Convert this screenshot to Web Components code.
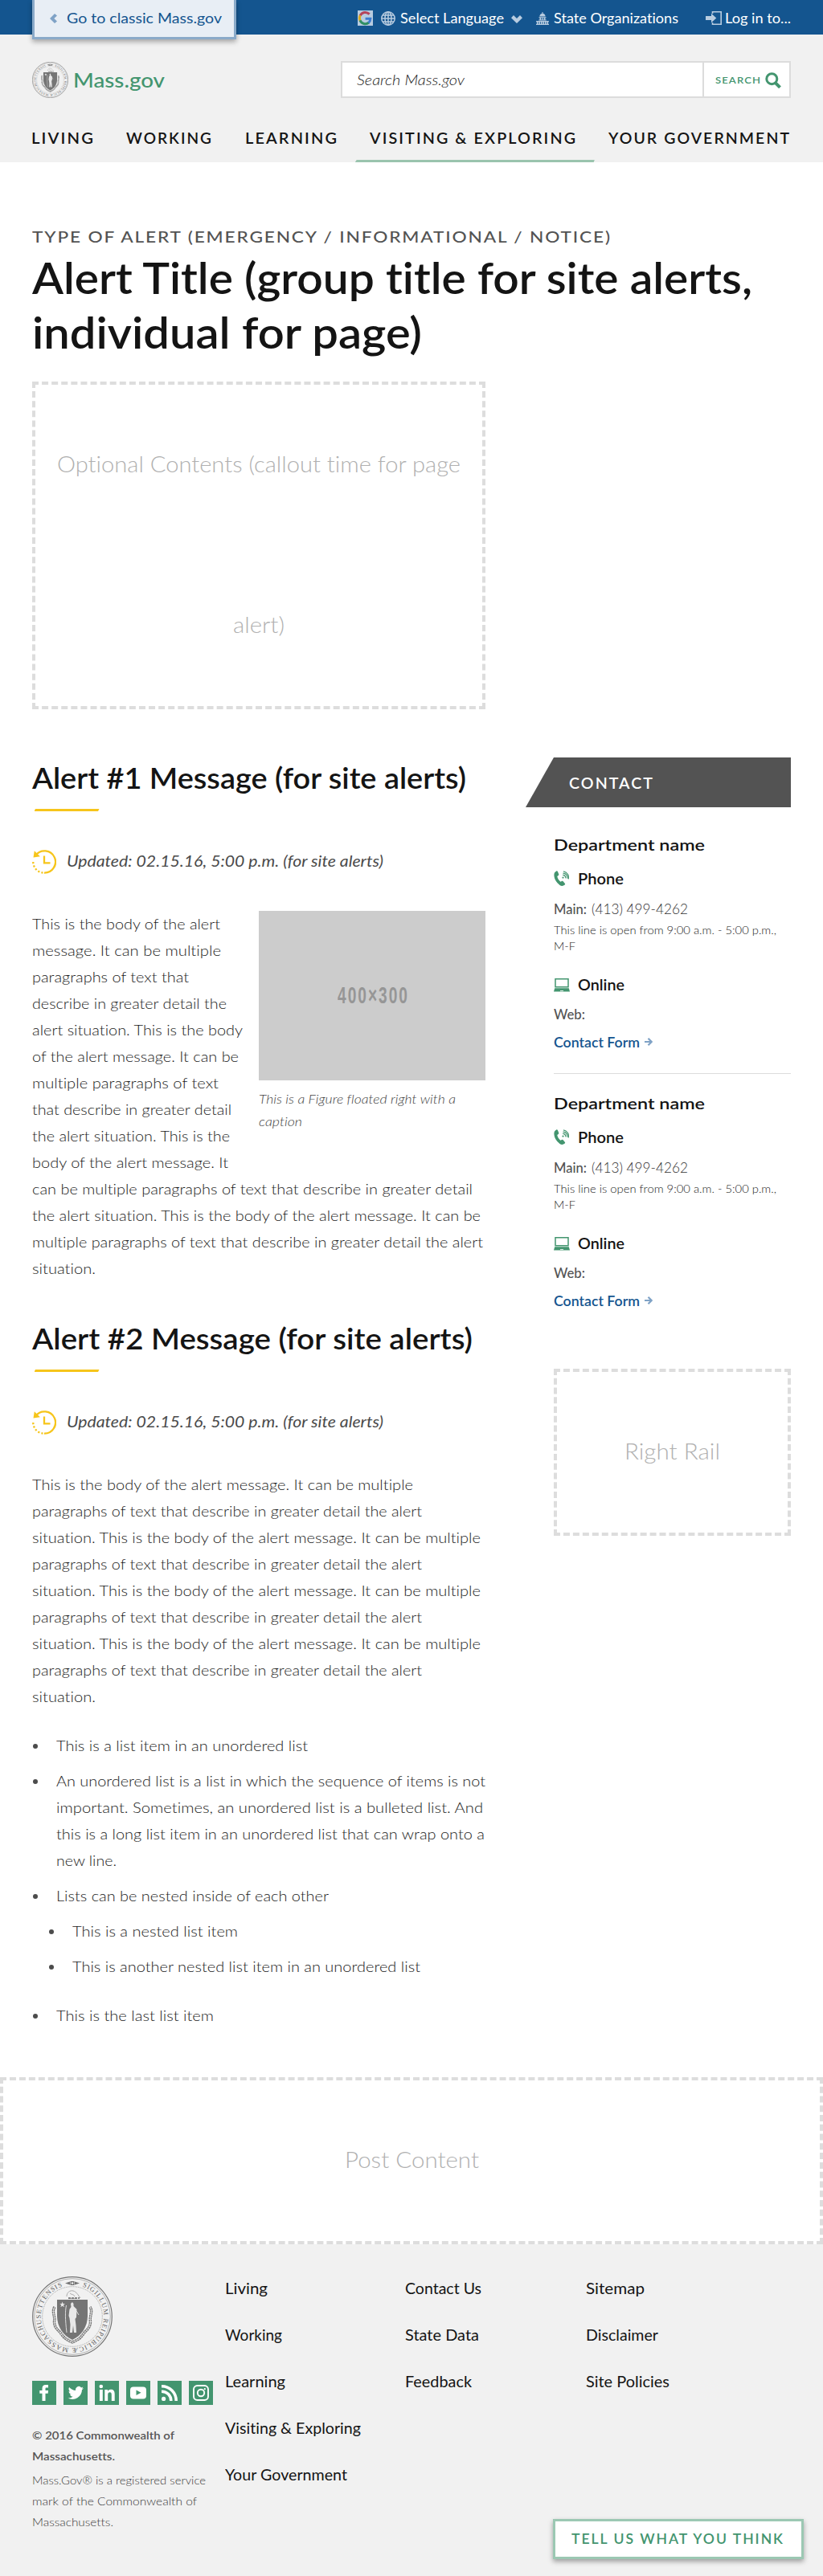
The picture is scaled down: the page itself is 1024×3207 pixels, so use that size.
<!DOCTYPE html>
<html lang="en">
<head>
<meta charset="utf-8">
<title>Mass.gov alerts</title>
<style>
body{margin:0;background:#fff;font-family:Lato,"Open Sans",sans-serif;font-variant-ligatures:none;color:#141414;--green:#43956f;--blue:#14558f;--gray:#1c1c1c;--line:#dcdcdc}
</style>
</head>
<body>
<alert-page></alert-page>
<script>
const define = (name, html, after) => customElements.define(name, class extends HTMLElement {
  connectedCallback() {
    if (this.shadowRoot) return;
    const t = document.createElement('template');
    t.innerHTML = typeof html === 'function' ? html(this) : html;
    this.attachShadow({mode: 'open'}).append(t.content.cloneNode(true));
    if (after) after(this);
  }
});
const line = (w, text) => `<fit-text w="${w}">${text}</fit-text>`;

const GLYPHS = {
  left: ['0 0 9 12', '<path fill="#7fa2c6" d="M6 0l3 2.600L5.300 6 9 9.400 6 12 0 6z"/>'],
  google: ['0 0 19 19', '<path fill="#b8cce0" d="M0 0h19v19H0z"/><g fill="none" stroke-width="3"><path stroke="#b5435a" d="M3.200 6.400A7 7 0 0 1 14.600 4.600"/><path stroke="#dba91c" d="M3.200 12.600a7 7 0 0 1 0-6.400"/><path stroke="#2f8f63" d="M3 12.400a7 7 0 0 0 11 2.600"/><path stroke="#3c7bd0" d="M13.400 15.400a7 7 0 0 0 2.500-5.200H9.600"/></g>'],
  globe: ['0 0 18 18', '<g fill="none" stroke="#b8cce0" stroke-width="1.500"><circle cx="9" cy="9" r="8.200"/><ellipse cx="9" cy="9" rx="4" ry="8.200"/><path d="M9 .8v16.400M.8 9h16.400M2 4.900h14M2 13.100h14"/></g>'],
  down: ['0 0 14 10', '<path fill="#b8cce0" d="M0 3.200L3 0l4 4 4-4 3 3.200L7 10z"/>'],
  capitol: ['0 0 16 16', '<path fill="#b8cce0" d="M7.500 0h1v1.800c2 .5 3 1.800 3.200 3.700H4.300C4.500 3.600 5.500 2.300 7.500 1.800zM3.500 6.200h9v1h-1v2.300h1.200v1H3.300v-1h1.200V7.200h-1zM0 11h16v1h-.8v3h.8v1H0v-1h.8v-3H0z"/><path stroke="#14558f" stroke-width=".8" d="M6.500 7.200v2.300M8 7.200v2.300M9.500 7.200v2.300M3 12v3M5.500 12v3M8 12v3M10.500 12v3M13 12v3"/>'],
  login: ['0 0 20 17', '<path fill="none" stroke="#b8cce0" stroke-width="1.600" d="M8.500 3V.8h10.700v15.400H8.500V14"/><path fill="#b8cce0" d="M0 6h7V2.700l6.300 5.800L7 14.300V11H0z"/>'],
  search: ['0 0 20 20', '<circle cx="8.300" cy="8.200" r="6.500" fill="none" stroke="#43956f" stroke-width="3"/><path stroke="#43956f" stroke-width="4" d="M12.500 12.800l6 6"/>'],
  clock: ['0 0 30 30', '<g fill="none" stroke="#f6c51b" stroke-width="2.300"><path d="M4.500 6.600A13.700 13.700 0 1 1 15 28.700"/><path stroke-dasharray="2.200 2.200" d="M13.500 28.600A13.700 13.700 0 0 1 1.400 13"/><path d="M15 7.500v8.900h7.500"/></g><path fill="#f6c51b" d="M2.800 1.200L1.500 9.600l8.400-1.300z"/>'],
  phone: ['0 0 19 20', '<path fill="#43956f" d="M3.200.4c.7-.4 1.400-.1 1.700.5l1.300 3.400c.3.800 0 1.300-.6 1.700l-1.300.9c.5 2.600 2 5 4.100 6.800l1.500-.8c.6-.4 1.300-.3 1.800.3l2.200 2.700c.4.600.3 1.200-.2 1.600-1.900 1.600-4 2-6.200.4C3.200 14.700.6 10.700.4 5.600.3 3.200 1.200 1.400 3.200.4z"/><circle cx="11.500" cy="8.600" r="1.100" fill="#43956f"/><g fill="none" stroke="#43956f" stroke-width="1.300"><path d="M11.200 5.400a3.300 3.300 0 0 1 3.600 3.900M11.500 3.100a5.700 5.700 0 0 1 5.600 6.600"/><path d="M12 .9a7.500 7.500 0 0 1 6.200 9.500"/></g>'],
  laptop: ['0 0 20 17', '<path fill="none" stroke="#43956f" stroke-width="1.500" d="M2 .8h16v9.900H2z"/><path fill="#43956f" d="M1.200 12.300h17.600L20 16.600H0z"/><path fill="#d9ebe2" d="M8 15h4v1H8z"/>'],
  arrow: ['0 0 10 10', '<path fill="none" stroke="#7fa2c6" stroke-width="2.200" d="M0 5h8M4.500.8L8.700 5l-4.200 4.200"/>'],
  facebook: ['0 0 30 30', '<path fill="#fff" d="M20 5h-3.200C13.800 5 12.500 6.800 12.500 9.500V12H9.300v3.700h3.200V25h4v-9.300h3.200l.3-3.700h-3.500V9.900c0-.9.400-1.300 1.300-1.300H20z"/>'],
  twitter: ['0 0 30 30', '<path fill="#fff" d="M25 8.900c-.7.300-1.300.5-2.100.6.700-.5 1.300-1.200 1.600-2-.7.400-1.500.7-2.400.9a4 4 0 0 0-6.900 3.700c-3.200-.2-6-1.700-8.100-4.100-1.100 1.900-.5 4.200 1.300 5.400-.6 0-1.200-.2-1.800-.5 0 2 1.400 3.600 3.200 4-.6.200-1.200.2-1.800.1.500 1.600 2 2.700 3.700 2.800A8.500 8.500 0 0 1 5.500 21.500 11.800 11.800 0 0 0 23 11.200c.8-.6 1.500-1.400 2-2.300z"/>'],
  linkedin: ['0 0 30 30', '<circle cx="7.800" cy="7" r="2.300" fill="#fff"/><path fill="#fff" d="M5.900 11h3.900v14H5.900zM12.300 11H16v1.900c.8-1.400 2.100-2.200 3.800-2.200 3.400 0 4.900 2 4.900 5.900V25h-3.900v-7.800c0-1.900-.6-3-2-3-1.700 0-2.600 1.100-2.600 3.100V25h-3.900z"/>'],
  youtube: ['0 0 30 30', '<rect x="5" y="7.500" width="20" height="15" rx="4" fill="#fff"/><path fill="#43956f" d="M12.500 11.500v6.500l6-3.200z"/>'],
  rss: ['0 0 30 30', '<circle cx="7.600" cy="22.400" r="2.600" fill="#fff"/><path fill="none" stroke="#fff" stroke-width="3.600" d="M5 13.200c6.800 0 11.800 5 11.800 11.800M5 6.800c10.300 0 18.200 7.900 18.200 18.200"/>'],
  instagram: ['0 0 30 30', '<g fill="none" stroke="#fff" stroke-width="1.900"><rect x="6" y="6" width="18" height="18" rx="4.500"/><circle cx="15" cy="15" r="4.200"/></g><circle cx="19.800" cy="10.200" r="1.100" fill="#fff"/>'],
};
define('glyph-icon', el => {
  const [box, art] = GLYPHS[el.getAttribute('name')];
  const [, , w, h] = box.split(' ');
  return `<style>:host{display:block;flex:none;width:${w}px;height:${h}px}svg{display:block}</style><svg width="${w}" height="${h}" viewBox="${box}">${art}</svg>`;
});

define('state-seal', el => `
<style>:host{display:block;flex:none;line-height:0}text{font:8.500px "Liberation Serif",serif;fill:#606060}</style>
<svg width="${el.getAttribute('size')}" height="${el.getAttribute('size')}" viewBox="0 0 100 100">
<defs><path id="ring" d="M62.500 12.700A39.300 39.300 0 1 1 39 12.200"/></defs>
<g fill="none" stroke="#757575"><circle cx="50" cy="50" r="49.300" stroke-width="1.200"/><circle cx="50" cy="50" r="47.300" stroke-width=".5"/><circle cx="50" cy="50" r="37.300" stroke-width="1" stroke-dasharray="1 .9" opacity=".6"/></g>
<text textLength="221" lengthAdjust="spacing"><textPath href="#ring">SIGILLUM REIPUBLICÆ MASSACHUSETTENSIS</textPath></text>
<path fill="#757575" d="M41 8.500l6-2v4zM59 8.500l-6-2v4zM47.500 6h5v5h-5z"/><circle cx="50" cy="8.500" r="1.300" fill="#f1f1f1"/>
<path fill="none" stroke="#757575" stroke-width="3.400" stroke-dasharray="2.400 .5" d="M28 38c-4 6 1 12-.5 18 0 9 6 11 9 16 4 6 9 8 13.500 10 4.500-2 9.500-4 13.500-10 3-5 9-7 9-16-1.500-6 3.500-12-.5-18"/>
<path fill="none" stroke="#f1f1f1" stroke-width=".9" d="M28 38c-4 6 1 12-.5 18 0 9 6 11 9 16 4 6 9 8 13.500 10 4.500-2 9.500-4 13.500-10 3-5 9-7 9-16-1.500-6 3.500-12-.5-18"/>
<path fill="#757575" d="M31 29h38v20c0 14-8 25-19 30-11-5-19-16-19-30z"/>
<path fill="none" stroke="#aaa" stroke-width="1" d="M45 27.500h11M43 25c0-5 4-8 8-7s6 5 9 9M47 21c2 2 5 1 6 4"/><path stroke="#666" stroke-width="1.500" stroke-dasharray="3 1" d="M45 27h14"/>
<path fill="#e8e8e8" d="M37.600 31.500l.9 2.500h2.500l-2 1.600.8 2.600-2.200-1.500-2.200 1.500.8-2.600-2-1.600h2.500zM48 34l2-2 1.500 2v3l4 4-.5 10-1.500 2 1 8 .5 9h-3l-1-9-1 9h-3l.5-10-1-8-1-3 1-8 2-3z"/>
<path fill="none" stroke="#ddd" stroke-width="1" d="M42.500 36c-1.500 8-1.500 16 .5 34M55 43l3 5"/>
</svg>`);

define('site-header', `
<style>
:host{display:block;background:#f1f1f1;height:202px;overflow:visible}
.bar{height:43px;background:var(--blue);padding:0 40px;display:flex;justify-content:space-between;color:#fff;font-size:18px;line-height:44px}
.tab{box-sizing:border-box;width:254px;height:49px;border:3px solid #8aaac9;border-top:0;background:#e8eef5;color:var(--blue);display:flex;align-items:center;padding:0 0 1px 19px;gap:12px;box-shadow:0 3px 6px rgba(0,0,0,.32);line-height:45px}
.tools{display:flex;align-items:center}
.tools glyph-icon{margin-top:2px}
.row{display:flex;justify-content:space-between;padding:33px 40px 0;align-items:center;height:46px}
.brand{display:flex;gap:6px;color:var(--green);font-size:25.500px;font-weight:500;align-items:center}
.search{box-sizing:border-box;width:560px;height:46px;border:2px solid var(--line);background:#fff;display:flex}
.field{flex:1;padding-left:18px;font:italic 300 18px/42px Lato,sans-serif;color:#222}
.go{width:108px;box-sizing:border-box;border-left:2px solid var(--line);display:flex;align-items:center;gap:6px;padding-left:14px;font-size:12px;font-weight:600;color:var(--green);letter-spacing:1px}
.go glyph-icon{margin-top:2px}
nav{display:flex;justify-content:space-between;padding:35px 42px 0 39px;font-size:19px;font-weight:600;line-height:30px;height:45px;letter-spacing:2px}
nav div{position:relative}
.on::after{content:"";position:absolute;left:-18px;right:-24px;bottom:0;height:3px;background:#9ac4ae;clip-path:polygon(2px 0,100% 0,calc(100% - 1px) 100%,0 100%)}
</style>
<div class="bar"><div class="tab"><glyph-icon name="left"></glyph-icon>${line(193,'Go to classic Mass.gov')}</div>
<div class="tools"><glyph-icon name="google"></glyph-icon><glyph-icon name="globe" style="margin-left:10px"></glyph-icon><span style="margin-left:6px">${line(129,'Select Language')}</span><glyph-icon name="down" style="margin:4px 0 0 9px"></glyph-icon><glyph-icon name="capitol" style="margin-left:17px"></glyph-icon><span style="margin-left:6px">${line(155,'State Organizations')}</span><glyph-icon name="login" style="margin-left:34px"></glyph-icon><span style="margin-left:4px">${line(82,'Log in to...')}</span></div></div>
<div class="row"><div class="brand"><state-seal size="45"></state-seal>${line(114,'Mass.gov')}</div>
<div class="search"><div class="field">${line(134,'Search Mass.gov')}</div><div class="go">${line(56,'SEARCH')}<glyph-icon name="search"></glyph-icon></div></div></div>
<nav><div>${line(77,'LIVING')}</div><div>${line(106,'WORKING')}</div><div>${line(114,'LEARNING')}</div><div class="on">${line(256,'VISITING &amp; EXPLORING')}</div><div>${line(225,'YOUR GOVERNMENT')}</div></nav>`);

define('dashed-box', `
<style>:host{display:block;box-sizing:border-box;border:4px dashed #ddd;color:#b0b0b0;font-size:28px;font-weight:300;line-height:200px;text-align:center}
div{height:100%;margin-top:-2px;display:flex;flex-direction:column;align-items:center}</style><div><slot></slot></div>`);

define('alert-message', el => `
<style>
:host{display:block;color:var(--gray);font-size:18.500px;font-weight:300;line-height:33px}
h2{margin:0;font-size:35.500px;font-weight:600;line-height:46px;color:#141414}
.rule{width:81px;height:3px;margin:15px 0 48px 2.500px;background:#f6c51b;clip-path:polygon(1.500px 0,100% 0,calc(100% - 1.500px) 100%,0 100%)}
.when{display:flex;gap:13px;height:30px;font-size:19px;font-weight:400;font-style:italic;line-height:28px;margin-bottom:46px;color:#4a4a4a}
</style>
<h2>${line(el.getAttribute('w'), el.getAttribute('heading'))}</h2><div class="rule"></div>
<div class="when"><glyph-icon name="clock"></glyph-icon>${line(394,'Updated: 02.15.16, 5:00 p.m. (for site alerts)')}</div>
<slot></slot>`);

define('alert-figure', `
<style>:host{display:block;float:right;width:282px;font-size:16px;font-style:italic;line-height:28px;color:#444}
.pic{height:211px;background:#ccc;color:#969696;font:bold 29px/210px "Liberation Sans Narrow","Liberation Sans",sans-serif;letter-spacing:3px;display:flex;justify-content:center;margin-bottom:9px}</style>
<div class="pic">${line(87,'400×300')}</div>${line(245,'This is a Figure floated right with a')}${line(54,'caption')}`);

define('bullet-list', `
<style>:host{display:flex;flex-direction:column;gap:11px}</style><slot></slot>`);
define('bullet-item', `
<style>:host{display:flex}i{flex:none;width:6px;height:6px;border-radius:3px;background:#4c4c4c;margin:14px 22.500px 0 1px}</style><i></i><div><slot></slot></div>`);

define('contact-card', `
<style>
:host{display:block;margin-left:35px;color:#535353;font-size:18px;line-height:30px}
h3,h4{margin:0;color:#141414;font-weight:600}
h3{font-size:20px}h4{font-size:19px;display:flex;align-items:center;gap:11px}
.main{display:flex;gap:6px;margin:7px 0 2px}
b{font-weight:500}span{font-weight:300;color:#333}
.hours{font-size:14px;font-weight:300;line-height:20px;color:#222}
.form{display:flex;gap:6px;align-items:center;color:var(--blue);font-weight:600;margin-top:5px}
</style>
<h3>${line(188,'Department name')}</h3>
<h4 style="margin-top:13px"><glyph-icon name="phone"></glyph-icon>${line(57,'Phone')}</h4>
<div class="main"><b>${line(41,'Main:')}</b><span>${line(120,'(413) 499-4262')}</span></div>
<div class="hours">${line(277,'This line is open from 9:00 a.m. - 5:00 p.m.,')}${line(27,'M-F')}</div>
<h4 style="margin-top:23px;margin-bottom:6px;gap:10px"><glyph-icon name="laptop"></glyph-icon>${line(58,'Online')}</h4>
<b>${line(39,'Web:')}</b>
<div class="form">${line(107,'Contact Form')}<glyph-icon name="arrow"></glyph-icon></div>`);

define('contact-rail', `
<style>:host{display:block;width:330px}
.bar{height:62px;background:#535353;clip-path:polygon(35px 0,100% 0,100% 100%,0 100%);color:#fff;font-size:19px;font-weight:600;letter-spacing:2px;line-height:64px;padding-left:54px;box-sizing:border-box;margin-bottom:31px}
hr{border:0;height:1px;background:var(--line);margin:24px 0 21px 35px}
dashed-box{height:208px;margin:70px 0 0 35px}</style>
<div class="bar">${line(104,'CONTACT')}</div><contact-card></contact-card><hr><contact-card></contact-card>
<dashed-box>${line(119,'Right Rail')}</dashed-box>`);

define('site-footer', () => {
  const col = links => `<div class="col">${links.map(([w, t]) => line(w, t)).join('')}</div>`;
  return `
<style>
:host{display:flex;position:relative;box-sizing:border-box;height:413px;background:#f1f1f1;padding:40px 0 0 40px}
.about{width:239.500px;font-size:14px;line-height:26px}
.social{display:flex;gap:9px;margin:30px 0 24.500px}
.social glyph-icon{background:var(--green)}
.own{font-weight:600;color:#555}.mark{margin-top:4px;font-weight:300;color:#3c3c3c}
.col{width:224.500px;display:flex;flex-direction:column;gap:28px;font-size:19px;line-height:30px}
.cta{position:absolute;right:24px;bottom:21px;box-sizing:border-box;width:312px;height:50px;border:3px solid #9cc8b3;background:#fff;box-shadow:0 3px 6px rgba(0,0,0,.35);color:var(--green);font-size:18px;font-weight:600;letter-spacing:2px;line-height:43px;padding-left:20px}
</style>
<div class="about"><state-seal size="100"></state-seal>
<div class="social">${['facebook','twitter','linkedin','youtube','rss','instagram'].map(n => `<glyph-icon name="${n}"></glyph-icon>`).join('')}</div>
<div class="own">${line(177,'© 2016 Commonwealth of')}${line(103,'Massachusetts.')}</div>
<div class="mark">${line(216,'Mass.Gov® is a registered service')}${line(205,'mark of the Commonwealth of')}${line(101,'Massachusetts.')}</div></div>
${col([[53,'Living'],[71,'Working'],[75,'Learning'],[169,'Visiting &amp; Exploring'],[152,'Your Government']])}
${col([[95,'Contact Us'],[92,'State Data'],[83,'Feedback']])}
${col([[73,'Sitemap'],[90,'Disclaimer'],[104,'Site Policies']])}
<div class="cta">${line(263,'TELL US WHAT YOU THINK')}</div>`;
});

const lines = list => list.map(([w, t]) => line(w, t)).join('');
const P2 = [485,'paragraphs of text that describe in greater detail the alert'];
const P3 = [558,'situation. This is the body of the alert message. It can be multiple'];
define('alert-page', `
<style>
:host{display:block}
main{box-sizing:border-box;height:2384px;padding:78px 40px 0}
.type{font-size:18.500px;font-weight:500;line-height:30px;letter-spacing:1.500px;color:#535353}
h1{margin:2px 0 27px;font-size:54px;font-weight:600;line-height:68px}
.optional{width:564px;height:408px}
.cols{display:flex;justify-content:space-between;margin-top:60px}
.left{width:564px;padding-top:3px}
.copy{margin-top:-.5px}
.left alert-message + alert-message{margin-top:48.500px}
bullet-list{margin-top:28px}
bullet-list bullet-list{margin:11px 0 17px -9.500px}
.post{height:208px}
</style>
<site-header></site-header>
<main>
<div class="type">${line(719,'TYPE OF ALERT (EMERGENCY / INFORMATIONAL / NOTICE)')}</div>
<h1>${line(896,'Alert Title (group title for site alerts,')}${line(485,'individual for page)')}</h1>
<dashed-box class="optional">${line(502,'Optional Contents (callout time for page')}${line(64,'alert)')}</dashed-box>
<div class="cols"><div class="left">
<alert-message heading="Alert #1 Message (for site alerts)" w="540"><alert-figure></alert-figure><div class="copy">${lines([
[234,'This is the body of the alert'],[235,'message. It can be multiple'],[195,'paragraphs of text that'],[242,'describe in greater detail the'],[262,'alert situation. This is the body'],[257,'of the alert message. It can be'],[232,'multiple paragraphs of text'],[248,'that describe in greater detail'],[246,'the alert situation. This is the'],[244,'body of the alert message. It'],[548,'can be multiple paragraphs of text that describe in greater detail'],[558,'the alert situation. This is the body of the alert message. It can be'],[561,'multiple paragraphs of text that describe in greater detail the alert'],[79,'situation.']])}</div></alert-message>
<alert-message heading="Alert #2 Message (for site alerts)" w="548"><div class="copy">${lines([
[474,'This is the body of the alert message. It can be multiple'],P2,P3,P2,P3,P2,P3,P2,[79,'situation.']])}</div>
<bullet-list>
<bullet-item>${line(313,'This is a list item in an unordered list')}</bullet-item>
<bullet-item>${lines([[534,'An unordered list is a list in which the sequence of items is not'],[531,'important. Sometimes, an unordered list is a bulleted list. And'],[533,'this is a long list item in an unordered list that can wrap onto a'],[75,'new line.']])}</bullet-item>
<bullet-item>${line(339,'Lists can be nested inside of each other')}<bullet-list><bullet-item>${line(206,'This is a nested list item')}</bullet-item><bullet-item>${line(433,'This is another nested list item in an unordered list')}</bullet-item></bullet-list></bullet-item>
<bullet-item>${line(196,'This is the last list item')}</bullet-item>
</bullet-list></alert-message>
</div><contact-rail></contact-rail></div>
</main>
<dashed-box class="post">${line(167,'Post Content')}</dashed-box>
<site-footer></site-footer>`);

/* One line of type, set wider or narrower so that it fills the width given in "w". */
define('fit-text', '<style>:host{display:block;white-space:nowrap}span{display:inline-block;transform-origin:0 50%;vertical-align:top}</style><span><slot></slot></span>', el => {
  const span = el.shadowRoot.querySelector('span');
  const w = +el.getAttribute('w');
  const track = parseFloat(getComputedStyle(el).letterSpacing) || 0;
  const natural = span.getBoundingClientRect().width;
  span.style.transform = `scaleX(${(w / (natural - track)).toFixed(4)})`;
  span.style.marginRight = (w - natural) + 'px';
  el.style.width = w + 'px';
});
</script>
</body>
</html>
